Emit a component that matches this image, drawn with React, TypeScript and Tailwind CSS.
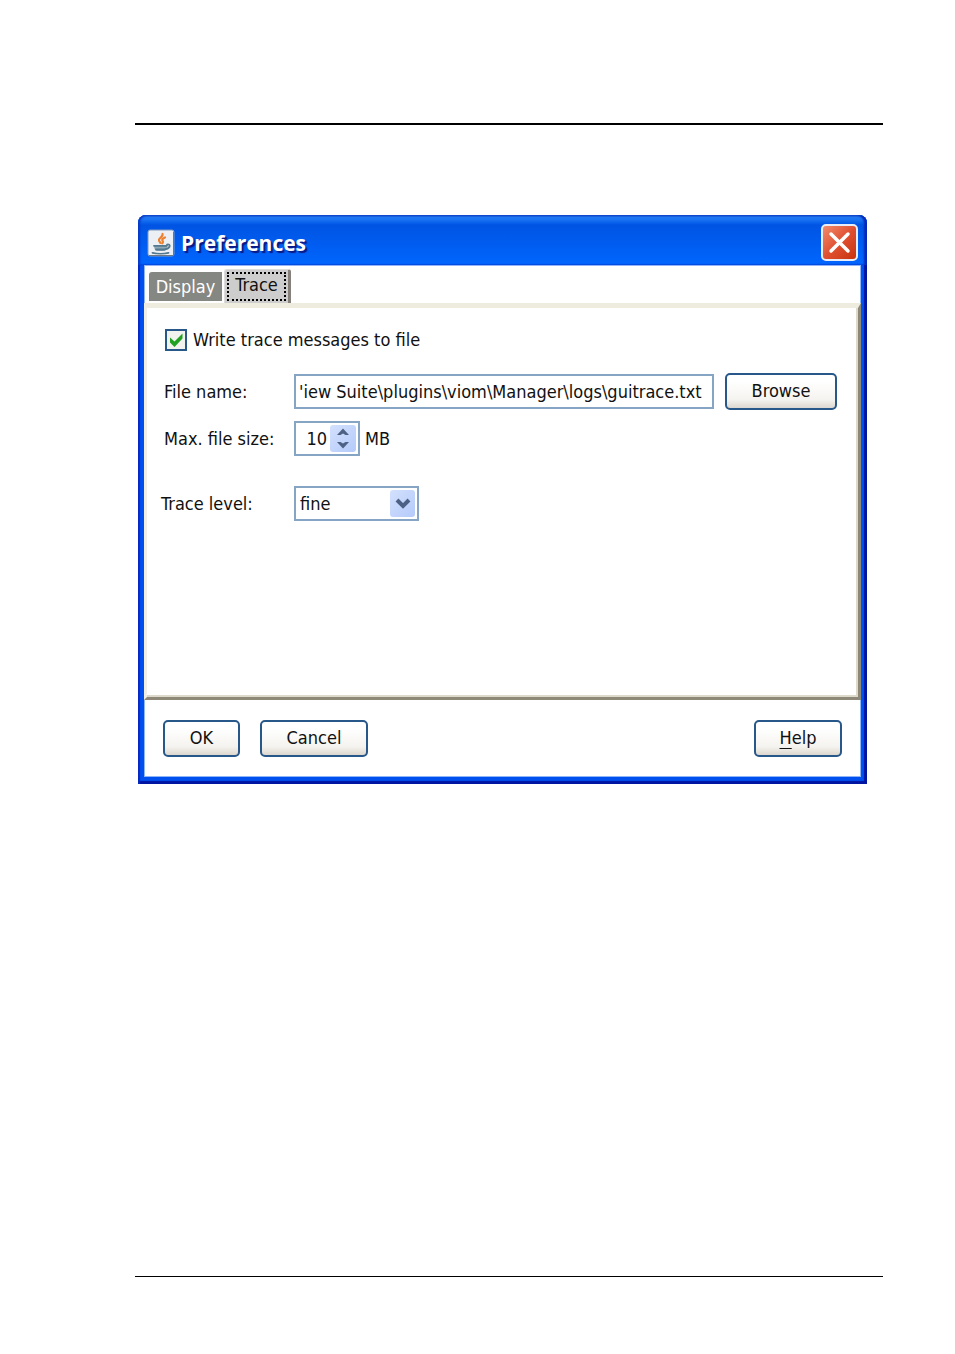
import { useState } from "react";
import type { ReactNode } from "react";

const JavaIcon = () => {
  return (
    <svg width="28" height="28" viewBox="0 0 28 28" aria-hidden="true">
      <rect x="1" y="1" width="26" height="26" rx="2" fill="#eceff3" stroke="#7f9cc0" />
      <path d="M2 26.500H26.500V3" fill="none" stroke="#6d7683" strokeWidth="1" />
      <path
        d="M15.500 5c1 3-4.500 4-3.500 6.500 .3 1 1 1.400 1.300 2.500M18 8.500c-2.500 1-3.500 2-2.300 3.500 .8 1 .3 1.500-.4 2.300"
        fill="none"
        stroke="#ee8130"
        strokeWidth="2.200"
        strokeLinecap="round"
      />
      <path d="M7 16.500h13c0 3-1 5-3 5.500h-7c-2-.5-3-2.500-3-5.500z" fill="#8fa6b5" />
      <path
        d="M7 16.800h13M9 20.500h9M5.500 23.800c4 1 12 1 16 0M20 15.500c4-1 3.500 3.500-1 4.500"
        fill="none"
        stroke="#54788f"
        strokeWidth="1.800"
        strokeLinecap="round"
      />
    </svg>
  );
};

const XpButton = ({ width, children }: { width: string; children: ReactNode }) => {
  return (
    <button
      type="button"
      className={`${width} h-[37px] shrink-0 rounded-[5px] border-2 border-[#28588a] bg-linear-to-b from-white from-20% via-[#f5f3ef] via-75% to-[#ddd8cf] pb-[2px] text-center`}
    >
      {children}
    </button>
  );
};

const TitleBar = () => {
  return (
    <div className="flex h-[50px] items-center justify-between rounded-t-[8px] bg-linear-to-b from-[#2f8cff] from-0% via-[#0054e3] via-20% to-[#0066ff] pt-[5px] pr-[9px] pl-[9px] shadow-[inset_2px_0_2px_#0838c8,inset_-3px_0_2px_#0628b8,inset_0_2px_2px_#1a5fd8]">
      <div className="flex items-center gap-[6px]">
        <JavaIcon />
        <h1 className="font-['Open_Sans',sans-serif] text-[21px] leading-6 font-bold text-white [text-shadow:2px_2px_1px_#0a1883]">
          Preferences
        </h1>
      </div>
      <button
        type="button"
        aria-label="Close"
        className="flex size-[37px] items-center justify-center rounded-[5px] border-2 border-[#e8edfa] bg-linear-to-br from-[#f08a6c] via-[#e05030] to-[#c73208]"
      >
        <svg width="23" height="23" viewBox="0 0 23 23" aria-hidden="true">
          <path d="M3 3L20 20M20 3L3 20" stroke="white" strokeWidth="3.500" strokeLinecap="round" />
        </svg>
      </button>
    </div>
  );
};

const App = () => {
  const [write, setWrite] = useState(true);
  const [file, setFile] = useState("'iew Suite\\plugins\\viom\\Manager\\logs\\guitrace.txt");
  const [size, setSize] = useState(10);
  const [level, setLevel] = useState("fine");

  return (
    <main className="flex min-h-screen flex-col bg-white pt-[123px] pr-[72px] pb-[77px] pl-[135px] font-['DejaVu_Sans_Condensed','DejaVu_Sans',sans-serif] text-[18px] leading-6 text-[#111]">
      <hr className="border-t-2 border-black" />

      <section className="mt-[90px] mr-4 ml-[3px] rounded-t-[8px] bg-[#0046e6]">
        <TitleBar />
        <div className="bg-[#0050f0] px-[6px] pb-[7px] shadow-[inset_2px_0_1px_#0628c0,inset_-3px_-3px_1px_#0014a0]">
          <div className="bg-white shadow-[inset_0_0_0_1px_#8fb5f8]">
            <div role="tablist" className="flex items-end pt-1 pl-[5px]">
              <button
                type="button"
                role="tab"
                aria-selected="false"
                className="mb-[2px] h-[29px] w-[73px] rounded-tl-[3px] bg-[#858783] text-center text-white"
              >
                Display
              </button>
              <button
                type="button"
                role="tab"
                aria-selected="true"
                className="ml-[2px] h-[34px] w-[67px] rounded-t-[3px] border-t border-r-[3px] border-l border-[#ddd] border-r-[#85817a] bg-[#cdcdcd] p-[2px]"
              >
                <span className="flex h-full items-center justify-center border-2 border-dotted border-black pb-1">
                  Trace
                </span>
              </button>
            </div>

            <div
              role="tabpanel"
              className="border-t-[5px] border-r-[3px] border-b-[3px] border-l-[3px] border-t-[#eeebdf] border-r-[#8d8878] border-b-[#8d8878] border-l-[#f1efe6] pt-5 pr-[21px] pb-[176px] shadow-[inset_-2px_-2px_0_#dedacb]"
            >
              <div className="pl-[18px]">
                <label className="flex items-center gap-[6px]">
                  <span className="relative flex size-[22px]">
                    <input
                      type="checkbox"
                      checked={write}
                      onChange={(e) => setWrite(e.target.checked)}
                      className="size-full appearance-none border-2 border-[#28588a] bg-[#f2f2ef]"
                    />
                    {write && (
                      <svg
                        width="22"
                        height="22"
                        viewBox="0 0 22 22"
                        className="pointer-events-none absolute inset-0"
                        aria-hidden="true"
                      >
                        <path d="M5 8.500v5l4.500 4.500L17.500 9.500V4.500L9.500 12.500z" fill="#21a121" />
                      </svg>
                    )}
                  </span>
                  Write trace messages to file
                </label>
              </div>

              <div className="mt-[21px] flex items-center pl-[17px]">
                <label htmlFor="file" className="w-[130px] shrink-0">
                  File name:
                </label>
                <input
                  id="file"
                  value={file}
                  onChange={(e) => setFile(e.target.value)}
                  className="h-[35px] min-w-0 flex-1 border-2 border-[#86a5c4] bg-white px-[3px]"
                />
                <div className="ml-[11px] flex">
                  <XpButton width="w-[112px]">Browse</XpButton>
                </div>
              </div>

              <div className="mt-[11px] flex items-center pl-[17px]">
                <label htmlFor="size" className="w-[130px] shrink-0">
                  Max. file size:
                </label>
                <div className="flex h-[35px] w-[66px] items-center border-2 border-[#86a5c4] pr-[2px]">
                  <input
                    id="size"
                    type="number"
                    value={size}
                    onChange={(e) => setSize(Number(e.target.value))}
                    className="min-w-0 flex-1 [appearance:textfield] pr-[3px] text-right [&::-webkit-inner-spin-button]:appearance-none"
                  />
                  <div className="flex h-[27px] w-[26px] flex-col rounded-[3px] bg-linear-to-br from-[#d4e1fd] to-[#b4cafa]">
                    <button
                      type="button"
                      aria-label="Increase"
                      onClick={() => setSize(size + 1)}
                      className="flex flex-1 items-center justify-center"
                    >
                      <svg width="14" height="8" viewBox="0 0 14 8" aria-hidden="true">
                        <path d="M1 7L7 .5 13 7H9.500L7 5.500 4.500 7z" fill="#4d6185" />
                      </svg>
                    </button>
                    <button
                      type="button"
                      aria-label="Decrease"
                      onClick={() => setSize(size - 1)}
                      className="flex flex-1 items-center justify-center"
                    >
                      <svg width="14" height="8" viewBox="0 0 14 8" aria-hidden="true">
                        <path d="M1 1l6 6.500L13 1H9.500L7 2.500 4.500 1z" fill="#4d6185" />
                      </svg>
                    </button>
                  </div>
                </div>
                <span className="ml-[5px]">MB</span>
              </div>

              <div className="mt-[30px] flex items-center pl-[14px]">
                <label htmlFor="level" className="w-[133px] shrink-0">
                  Trace level:
                </label>
                <div className="relative flex h-[35px] w-[125px]">
                  <select
                    id="level"
                    value={level}
                    onChange={(e) => setLevel(e.target.value)}
                    className="size-full appearance-none border-2 border-[#86a5c4] bg-white pl-1"
                  >
                    <option value="fine">fine</option>
                  </select>
                  <span className="pointer-events-none absolute top-1 right-1 flex h-[27px] w-[25px] items-center justify-center rounded-[3px] bg-linear-to-br from-[#d4e1fd] to-[#b4cafa]">
                    <svg width="16" height="12" viewBox="0 0 16 12" aria-hidden="true">
                      <path d="M2 2l6 6 6-6" fill="none" stroke="#4d6185" strokeWidth="4" />
                    </svg>
                  </span>
                </div>
              </div>
            </div>

            <div className="flex items-center gap-5 px-[19px] py-5">
              <XpButton width="w-[77px]">OK</XpButton>
              <XpButton width="w-[108px]">Cancel</XpButton>
              <div className="ml-auto flex">
                <XpButton width="w-[88px]">
                  <span className="underline underline-offset-4">H</span>elp
                </XpButton>
              </div>
            </div>
          </div>
        </div>
      </section>

      <hr className="mt-auto border-t border-black" />
    </main>
  );
};

export default App;
